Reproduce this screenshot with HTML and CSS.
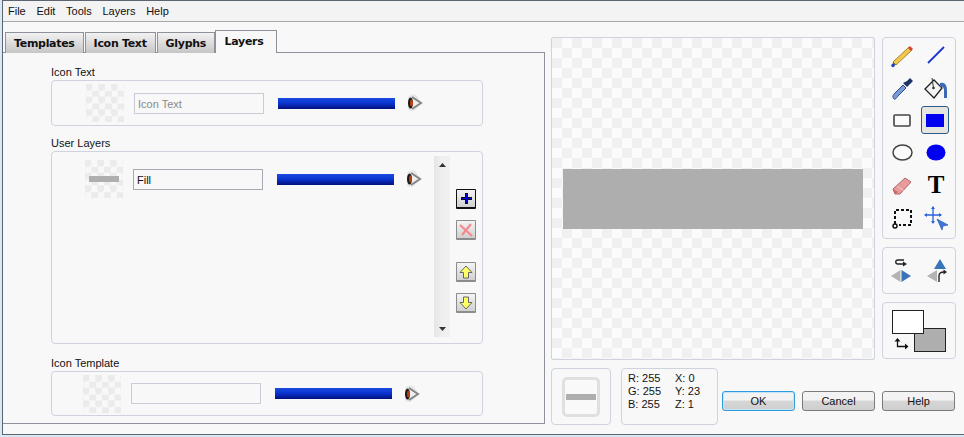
FILE: index.html
```html
<!DOCTYPE html>
<html lang="en">
<head>
  <meta charset="UTF-8" />
  <title>Icon Editor</title>
  <link rel="stylesheet" href="styles.css">
</head>
<body>
  <div class="window">
    <nav class="menubar">
      <span>File</span><span>Edit</span><span>Tools</span><span>Layers</span><span>Help</span>
    </nav>

    <div class="content">
      <section class="left">
        <div class="tabs">
          <div class="tab">Templates</div>
          <div class="tab">Icon Text</div>
          <div class="tab">Glyphs</div>
          <div class="tab active">Layers</div>
        </div>
        <div class="pane">
          <div class="group-label">Icon Text</div>
          <div class="group group-text">
            <div class="thumb"></div>
            <div class="field muted">Icon Text</div>
            <div class="bar"></div>
            <svg class="eye" width="18" height="18" viewBox="0 0 18 18"><use href="#eye"/></svg>
          </div>

          <div class="group-label label-user">User Layers</div>
          <div class="group group-user">
            <div class="layer-row">
              <div class="thumb"><div class="thumb-fill"></div></div>
              <div class="field dark">Fill</div>
              <div class="bar"></div>
              <svg class="eye" width="18" height="18" viewBox="0 0 18 18"><use href="#eye"/></svg>
            </div>
            <div class="scrollbar">
              <svg width="7" height="4" viewBox="0 0 7 4"><path d="M0 4 3.500 0 7 4z" fill="#333"/></svg>
              <svg width="7" height="4" viewBox="0 0 7 4"><path d="M0 0 3.500 4 7 0z" fill="#333"/></svg>
            </div>
            <div class="side-btns">
              <div class="sq-btn focus">
                <svg width="13" height="13" viewBox="0 0 13 13"><path d="M5 1h3v4h4v3H8v4H5V8H1V5h4z" fill="#111"/><path d="M6.500 2v9M2 6.500h9" stroke="#0000e0" stroke-width="1.200"/></svg>
              </div>
              <div class="sq-btn">
                <svg width="14" height="14" viewBox="0 0 14 14"><path d="M1 2 13 13M12 1 3 12" stroke="#f58a8e" stroke-width="2.200"/></svg>
              </div>
              <div class="sq-btn gap">
                <svg width="14" height="14" viewBox="0 0 14 14"><path d="M7 1 13 7.500H9.500V13h-5V7.500H1z" fill="#ffff66" stroke="#666"/></svg>
              </div>
              <div class="sq-btn">
                <svg width="14" height="14" viewBox="0 0 14 14"><path d="M7 13 13 6.500H9.500V1h-5v5.500H1z" fill="#ffff66" stroke="#666"/></svg>
              </div>
            </div>
          </div>

          <div class="group-label label-template">Icon Template</div>
          <div class="group group-template">
            <div class="thumb"></div>
            <div class="field"></div>
            <div class="bar"></div>
            <svg class="eye" width="18" height="18" viewBox="0 0 18 18"><use href="#eye"/></svg>
          </div>
        </div>
      </section>

      <section class="right">
        <div class="top-row">
          <div class="canvas"><div class="canvas-fill"></div></div>
          <div class="tool-col">
            <div class="panel tools">
              <div class="tool">
                <svg width="26" height="26" viewBox="0 0 26 26"><path d="M4 20 7 23 23 8 20 5z" fill="#f2c84b" stroke="#a8843a"/><path d="M19 6 22 9 24 7 21 4z" fill="#d8433c"/><path d="M4 20 3 24 7 23z" fill="#665"/><circle cx="4" cy="23.500" r="1.700" fill="#1a3fd0"/></svg>
              </div>
              <div class="tool">
                <svg width="26" height="26" viewBox="0 0 26 26"><path d="M5 21 21 5" stroke="#1a35d0" stroke-width="1.800"/></svg>
              </div>
              <div class="tool">
                <svg width="26" height="26" viewBox="0 0 26 26"><path d="M5 24C3 22 4 20 6 18L14 10 17 13 9 21C7.500 23 6 25 5 24z" fill="#7d9ad0" stroke="#2b4a9c"/><path d="M14 8 18 12 21 9 24 6 21 3 18 6z" fill="#1c3564"/></svg>
              </div>
              <div class="tool">
                <svg width="26" height="26" viewBox="0 0 26 26"><path d="M2 14 11 5 19 13 11 23z" fill="#f4f4f4" stroke="#222" stroke-width="1.300"/><path d="M9 3 10.500 13" stroke="#333"/><circle cx="10.500" cy="13" r="1.300" fill="#333"/><path d="M17 8C22 7 24 10 24 16V23H21V15C21 12 19 11 17 12z" fill="#3d68b5"/></svg>
              </div>
              <div class="tool">
                <svg width="18" height="13" viewBox="0 0 18 13"><rect x="1" y="1" width="16" height="11" rx="1" fill="#fafafa" stroke="#444" stroke-width="1.600"/></svg>
              </div>
              <div class="tool selected"><div class="rect-fill"></div></div>
              <div class="tool">
                <svg width="21" height="17" viewBox="0 0 21 17"><ellipse cx="10.500" cy="8.500" rx="9.500" ry="7.500" fill="#fafafa" stroke="#444" stroke-width="1.500"/></svg>
              </div>
              <div class="tool">
                <svg width="20" height="17" viewBox="0 0 20 17"><ellipse cx="10" cy="8.500" rx="9.500" ry="8" fill="#0000f0"/></svg>
              </div>
              <div class="tool">
                <svg width="26" height="26" viewBox="0 0 26 26"><path d="M4 17 16 6 22 10 11 22 6 22z" fill="#e99a9a" stroke="#a66"/><path d="M4 17 9 20 6 22z" fill="#c66"/><path d="M8 14 15 19" stroke="#fff" stroke-width=".8" opacity=".6"/></svg>
              </div>
              <div class="tool t-glyph">T</div>
              <div class="tool">
                <svg width="24" height="24" viewBox="0 0 24 24"><path d="M5 18V4h16v15H9" fill="none" stroke="#111" stroke-width="2" stroke-dasharray="3 2"/><circle cx="5" cy="20" r="2" fill="none" stroke="#111" stroke-width="1.500"/></svg>
              </div>
              <div class="tool">
                <svg width="26" height="26" viewBox="0 0 26 26"><path d="M10 2V18M2 10H18" stroke="#2a62d8" stroke-width="1.300"/><path d="M10 1 8 4H12zM10 19 8 16H12zM1 10 4 8V12zM19 10 16 8V12z" fill="#2a62d8"/><path d="M14 14 25 20 20 21 19 25z" fill="#3d78e0" stroke="#1d4aa8" stroke-width=".6"/></svg>
              </div>
            </div>
            <div class="panel flips">
              <svg width="22" height="24" viewBox="0 0 22 24"><path d="M14 1H8C5 1 5 5 8 5H14" fill="none" stroke="#222" stroke-width="1.300"/><path d="M13 2.500 17 5 13 7.500z" fill="#222"/><path d="M10.500 11V23L1 17z" fill="#b3b3b3"/><path d="M11.500 11V23L21 17z" fill="#3a74b8"/></svg>
              <svg width="23" height="24" viewBox="0 0 23 24"><path d="M15 0 21 10H9z" fill="#3a74b8"/><path d="M12 11V23L2 17z" fill="#b3b3b3"/><path d="M14 23V17C14 14 16 13 19 13" fill="none" stroke="#222" stroke-width="1.400"/><path d="M18.500 10.500 22 13 18.500 15.500z" fill="#222"/></svg>
            </div>
            <div class="panel colors">
              <div class="swatches">
                <div class="swatch back"></div>
                <div class="swatch front"></div>
                <svg class="swap" width="15" height="13" viewBox="0 0 15 13"><path d="M3.500 3V8.500H11" fill="none" stroke="#111" stroke-width="1.300"/><path d="M3.500 0 6.500 3.500H.5zM14.500 8.500 11 5.500V11.500z" fill="#111"/></svg>
              </div>
            </div>
          </div>
        </div>

        <div class="bottom-row">
          <div class="panel preview"><div class="preview-inner"><div class="preview-bar"></div></div></div>
          <div class="panel info">
            <span>R: 255</span><span>X: 0</span>
            <span>G: 255</span><span>Y: 23</span>
            <span>B: 255</span><span>Z: 1</span>
          </div>
          <div class="actions">
            <button class="btn default">OK</button>
            <button class="btn">Cancel</button>
            <button class="btn">Help</button>
          </div>
        </div>
      </section>
    </div>
  </div>

  <svg width="0" height="0" class="defs">
    <defs>
      <g id="eye">
        <path d="M3 3C6 0 10 0 12 2L17 9 11 15C8 18 4 17 3 15z" fill="#e6e6e6"/>
        <path d="M7 3 16 9 7 15" fill="#f0f0f0" stroke="#858585" stroke-width="2"/>
        <ellipse cx="5.500" cy="9" rx="2.500" ry="5.500" fill="#1a1a1a"/>
        <ellipse cx="6.500" cy="9" rx="1.500" ry="3.500" fill="#b8400e"/>
      </g>
    </defs>
  </svg>
</body>
</html>
```

FILE: styles.css
```css
:root {
  --bg: #f8f8f9;
  --line: #ced3dd;
  --fill: #aeaeae;
  --font: "Liberation Sans", sans-serif;
}

* {
  box-sizing: border-box;
}

body {
  margin: 0;
  background: #d8e8f5;
  font-family: var(--font);
  font-size: 11px;
  color: #111;
}

.defs {
  display: block;
  height: 0;
}

.window {
  width: 962px;
  height: 435px;
  margin-left: 2px;
  background: var(--bg);
  border-top: 1px solid #5c6472;
  border-bottom: 1px solid #5c6472;
  border-left: 1px solid #5c6472;
}

.menubar {
  height: 21px;
  background: #f3f3f3;
  border-bottom: 1px solid #a8a8a8;
  display: flex;
  align-items: center;
  gap: 10.700px;
  padding-left: 5px;
  line-height: 14px;
}

.content {
  display: flex;
}

.left {
  width: 542px;
  padding-top: 9px;
}

.tabs {
  display: flex;
  align-items: flex-end;
  height: 22px;
  padding-left: 2px;
  gap: 1px;
  margin-bottom: -1px;
  position: relative;
}

.tab {
  height: 21px;
  border: 1px solid #8e929a;
  border-bottom: none;
  background: linear-gradient(#f2f2f2, #c6c6c6);
  font-family: "DejaVu Sans", sans-serif;
  font-weight: bold;
  font-size: 11px;
  letter-spacing: -.3px;
  line-height: 21px;
  padding: 0 8px;
  white-space: nowrap;
}

.tab.active {
  height: 23px;
  margin-left: -1px;
  width: 62px;
  padding: 0 4px 0 0;
  background: var(--bg);
  line-height: 21px;
  text-align: center;
}

.pane {
  height: 372px;
  border-top: 1px solid #8e929a;
  border-right: 1px solid #8e929a;
  border-bottom: 1px solid #8e929a;
  padding: 11px 0 0 48px;
}

.group-label {
  height: 16px;
  line-height: 16px;
}

.label-user {
  margin-top: 9px;
}

.label-template {
  margin-top: 11px;
}

.group {
  width: 432px;
  border: 1px solid var(--line);
  border-radius: 4px;
  display: flex;
  align-items: center;
}

.group-text {
  height: 46px;
  padding-left: 34px;
}

.group-user {
  height: 193px;
  align-items: flex-start;
  padding: 4px 0 0 33px;
}

.group-template {
  height: 45px;
  padding-left: 31px;
}

.layer-row {
  display: flex;
  align-items: center;
  height: 46px;
}

.thumb {
  width: 38px;
  height: 38px;
  flex: none;
  display: flex;
  align-items: center;
  justify-content: center;
  background: repeating-conic-gradient(#ebebeb 0 25%, #f8f8f8 0 50%) 6.350px 0 / 12.700px 12.700px;
}

.thumb-fill {
  width: 30px;
  height: 6px;
  background: var(--fill);
}

.field {
  width: 130px;
  height: 21px;
  margin-left: 10px;
  border: 1px solid #c9cbd6;
  padding-left: 3px;
  line-height: 21px;
  flex: none;
}

.muted {
  color: #8a8a8a;
}

.field.dark {
  border-color: #a9a9b4;
  color: #111;
}

.bar {
  width: 117px;
  height: 11px;
  margin-left: 14px;
  flex: none;
  background: linear-gradient(#1a4be0, #0a35d2 45%, #02107c);
}

.eye {
  margin-left: 10px;
  flex: none;
}

.scrollbar {
  width: 16px;
  height: 181px;
  margin-left: 12px;
  background: linear-gradient(90deg, #e6e6e6, #efefef 50%, #f0f0f0);
  display: flex;
  flex-direction: column;
  justify-content: space-between;
  align-items: center;
  padding: 7px 0 6px;
  flex: none;
}

.side-btns {
  display: flex;
  flex-direction: column;
  margin: 33px 0 0 6px;
  gap: 11px;
}

.sq-btn {
  width: 20px;
  height: 20px;
  display: flex;
  align-items: center;
  justify-content: center;
  background: linear-gradient(#f4f4f4, #d0d0d0);
  border: 1px solid #8c8c8c;
  border-bottom-width: 2px;
  border-radius: 1px;
}

.sq-btn.focus {
  border-color: #111;
}

.sq-btn.gap {
  margin-top: 11px;
}

.right {
  padding: 15px 0 0 6px;
}

.top-row {
  display: flex;
  gap: 7px;
}

.canvas {
  width: 324px;
  height: 323px;
  border: 1px solid var(--line);
  border-radius: 2px;
  display: flex;
  align-items: center;
  justify-content: center;
  background: repeating-conic-gradient(#f0f0f0 0 25%, #fbfbfb 0 50%) 10px 0 / 20px 20px;
}

.canvas-fill {
  width: 300px;
  height: 60px;
  background: var(--fill);
}

.tool-col {
  display: flex;
  flex-direction: column;
  gap: 8px;
}

.panel {
  border: 1px solid var(--line);
  border-radius: 4px;
}

.tools {
  width: 74px;
  height: 202px;
  padding-top: 1px;
  display: grid;
  grid-template-columns: 34px 34px;
  grid-auto-rows: 32.500px;
  justify-content: center;
  align-content: start;
}

.tool {
  display: flex;
  align-items: center;
  justify-content: center;
}

.tool.selected {
  width: 28px;
  height: 28px;
  margin: 2px 0 0 2px;
  border: 1px solid #2c5a86;
  border-radius: 3px;
  background: #e6e6e0;
}

.rect-fill {
  width: 18px;
  height: 13px;
  background: #0000f0;
}

.t-glyph {
  font-family: "Liberation Serif", serif;
  font-weight: bold;
  font-size: 25px;
  color: #000;
}

.flips {
  width: 74px;
  height: 47px;
  display: flex;
  align-items: center;
  justify-content: center;
  gap: 13px;
}

.colors {
  width: 74px;
  height: 57px;
  padding: 7px 0 0 9px;
}

.swatches {
  position: relative;
  width: 54px;
  height: 42px;
}

.swatch {
  position: absolute;
}

.swatch.back {
  left: 22px;
  top: 18px;
  width: 32px;
  height: 24px;
  background: var(--fill);
  border: 1px solid #222;
}

.swatch.front {
  left: 0;
  top: 0;
  width: 32px;
  height: 24px;
  background: #fff;
  border: 1px solid #222;
}

.swap {
  position: absolute;
  left: 2px;
  top: 28px;
}

.bottom-row {
  display: flex;
  align-items: flex-start;
  margin-top: 8px;
}

.preview {
  width: 60px;
  height: 57px;
  display: flex;
  align-items: center;
  justify-content: center;
}

.preview-inner {
  width: 38px;
  height: 40px;
  background: #f9f9f9;
  border: 3px solid #e0e0e0;
  border-radius: 5px;
  display: flex;
  align-items: center;
  justify-content: center;
}

.preview-bar {
  width: 30px;
  height: 6px;
  background: var(--fill);
}

.info {
  width: 97px;
  height: 57px;
  margin-left: 10px;
  padding: 3px 0 0 6px;
  display: grid;
  grid-template-columns: 47px 1fr;
  grid-auto-rows: 13px;
  line-height: 13px;
}

.actions {
  display: flex;
  gap: 7px;
  margin: 23px 0 0 4px;
}

.btn {
  width: 73px;
  height: 20px;
  padding: 0;
  font-family: var(--font);
  font-size: 11px;
  color: #111;
  border: 1px solid #7b7b7b;
  border-radius: 3px;
  background: linear-gradient(#f3f3f3 0 45%, #d6d6d6 50%, #cfcfcf);
}

.btn.default {
  border-color: #2f9bdc;
  box-shadow: inset 0 0 0 1px #c5e6f8;
}
```
